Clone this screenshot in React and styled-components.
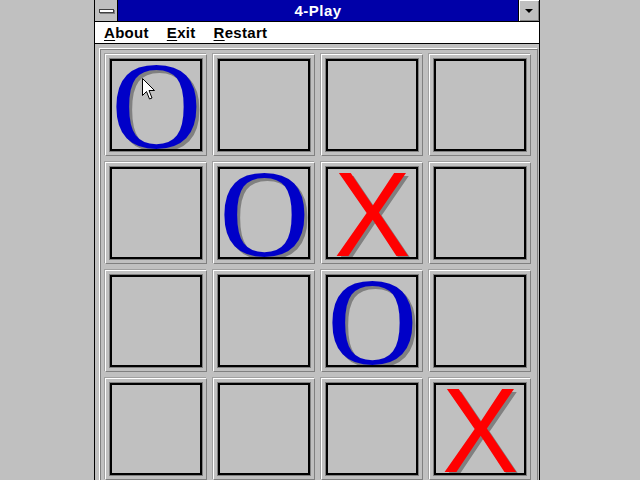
import React from 'react';
import styled, { createGlobalStyle } from 'styled-components';

const GlobalStyle = createGlobalStyle`
  html, body {
    margin: 0;
    padding: 0;
    background: #c0c0c0;
    overflow: hidden;
  }
  body {
    font-family: "Liberation Sans", Arial, sans-serif;
  }
`;

const Desktop = styled.div`
  width: 640px;
  height: 480px;
  overflow: hidden;
  padding-left: 94px;
  box-sizing: border-box;
`;

const Window = styled.div`
  display: flex;
  flex-direction: column;
  width: 446px;
  height: 520px;
  box-sizing: border-box;
  border-left: 1px solid #000;
  border-right: 1px solid #000;
  background: #c0c0c0;
`;

const TitleBar = styled.div`
  display: flex;
  height: 21px;
  border-bottom: 1px solid #000;
`;

const SysMenu = styled.div`
  display: flex;
  align-items: center;
  justify-content: center;
  width: 22px;
  border-right: 1px solid #000;
  background: #c0c0c0;
`;

const SysBar = styled.div`
  width: 13px;
  height: 2px;
  background: #fff;
  border: 1px solid #404040;
  box-shadow: 1px 1px 0 #808080;
`;

const Caption = styled.div`
  flex: 1;
  background: #0000a8;
  color: #fff;
  font-weight: bold;
  font-size: 15px;
  letter-spacing: 0.5px;
  line-height: 21px;
  text-align: center;
`;

const DropButton = styled.div`
  display: flex;
  align-items: center;
  justify-content: center;
  width: 21px;
  box-sizing: border-box;
  border-left: 1px solid #000;
  background: #c0c0c0;
  box-shadow: inset 1px 1px 0 #fff, inset -1px -1px 0 #808080;
`;

const Arrow = styled.div`
  width: 0;
  height: 0;
  border-left: 4px solid transparent;
  border-right: 4px solid transparent;
  border-top: 4px solid #000;
`;

const MenuBar = styled.div`
  display: flex;
  height: 21px;
  background: #fff;
  border-bottom: 1px solid #000;
`;

const MenuItem = styled.div`
  display: flex;
  padding: 1px 9px 0;
  font-size: 15px;
  font-weight: bold;
  letter-spacing: 0.3px;
  line-height: 20px;
  color: #000;
`;

const Accel = styled.span`
  text-decoration: underline;
  text-underline-offset: 2px;
`;

const Panel = styled.div`
  margin: 4px 1px 0 4px;
  padding: 5px;
  border-top: 1px solid #fff;
  border-left: 1px solid #fff;
  border-right: 1px solid #808080;
  border-bottom: 1px solid #808080;
  box-shadow: inset 1px 1px 0 #808080;
`;

const Board = styled.div`
  display: grid;
  grid-template-columns: repeat(4, 102px);
  grid-auto-rows: 102px;
  gap: 6px;
`;

const Cell = styled.div`
  box-sizing: border-box;
  padding: 4px;
  border-top: 1px solid #fff;
  border-left: 1px solid #fff;
  border-right: 1px solid #808080;
  border-bottom: 1px solid #808080;
  box-shadow: -1px -1px 0 #a0a0a0;
`;

const Inner = styled.div`
  position: relative;
  display: flex;
  align-items: center;
  justify-content: center;
  width: 92px;
  height: 92px;
  box-sizing: border-box;
  border: 2px solid #000;
  box-shadow: 0 0 0 1px #808080;
  overflow: hidden;
`;

const Piece = styled.span`
  height: 88px;
  line-height: 88px;
  text-shadow: 3px 3px 0 #808080;
  ${(p) =>
    p.$kind === 'O'
      ? `
    font-family: "Liberation Serif", "Times New Roman", serif;
    font-size: 125px;
    color: #0000c8;
    margin: 1px 0 0 1px;
  `
      : `
    font-family: "Liberation Sans", Arial, sans-serif;
    font-size: 121px;
    color: #ff0000;
    transform: scaleX(0.95);
    margin: 2px 0 0 1px;
  `}
`;

const Pointer = styled.svg`
  position: absolute;
  left: 30px;
  top: 17px;
`;

const board = [
  ['O', '', '', ''],
  ['', 'O', 'X', ''],
  ['', '', 'O', ''],
  ['', '', '', 'X'],
];

export default function App() {
  return (
    <Desktop>
      <GlobalStyle />
      <Window>
        <TitleBar>
          <SysMenu>
            <SysBar />
          </SysMenu>
          <Caption>4-Play</Caption>
          <DropButton>
            <Arrow />
          </DropButton>
        </TitleBar>
        <MenuBar>
          <MenuItem>
            <span>
              <Accel>A</Accel>bout
            </span>
          </MenuItem>
          <MenuItem>
            <span>
              <Accel>E</Accel>xit
            </span>
          </MenuItem>
          <MenuItem>
            <span>
              <Accel>R</Accel>estart
            </span>
          </MenuItem>
        </MenuBar>
        <Panel>
          <Board>
            {board.map((row, r) =>
              row.map((v, c) => (
                <Cell key={r + '-' + c}>
                  <Inner>
                    {v && <Piece $kind={v}>{v}</Piece>}
                    {r === 0 && c === 0 && (
                      <Pointer width="14" height="23" viewBox="0 0 14 23">
                        <path
                          d="M0.5 0.5 L0.5 17.5 L4.5 13.5 L7.5 21 L10 20 L7 12.5 L12.5 12.5 Z"
                          fill="#fff"
                          stroke="#000"
                          strokeWidth="1"
                        />
                      </Pointer>
                    )}
                  </Inner>
                </Cell>
              ))
            )}
          </Board>
        </Panel>
      </Window>
    </Desktop>
  );
}
